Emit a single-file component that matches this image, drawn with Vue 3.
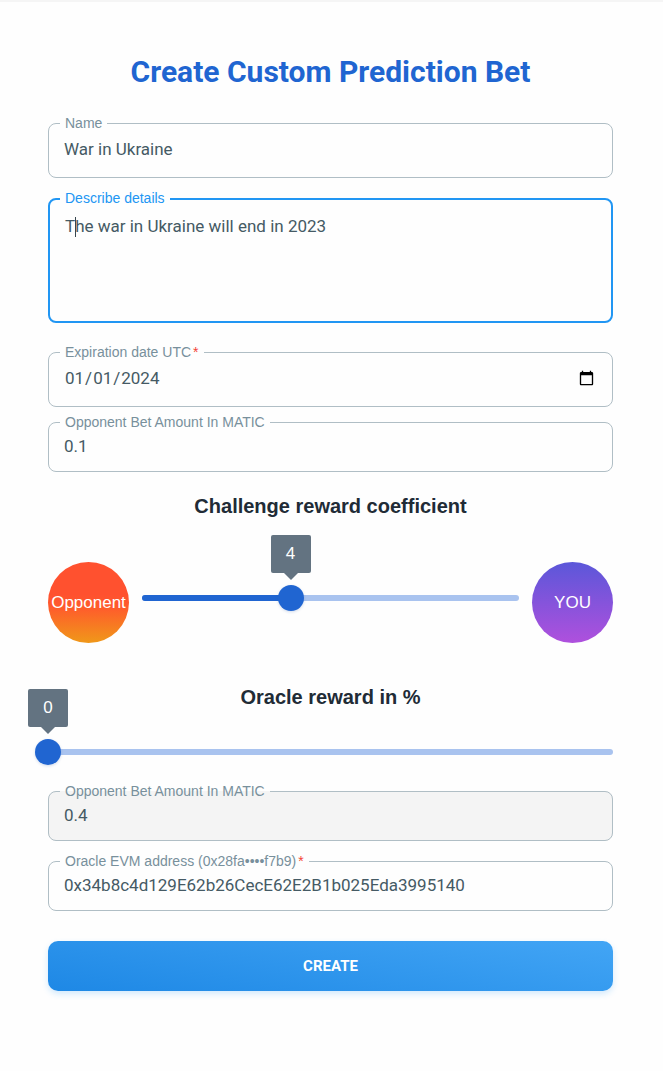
<script setup>
import { ref, computed } from 'vue'

const name = ref('War in Ukraine')
const details = ref('The war in Ukraine will end in 2023')
const expires = ref('2024-01-01')
const amount = ref('0.1')
const oracle = ref('0x34b8c4d129E62b26CecE62E2B1b025Eda3995140')
const coefficient = ref(4)
const reward = ref(0)

const coefficientPos = computed(() => ((coefficient.value - 0.1) / 9.9) * 100 + '%')
const rewardPos = computed(() => reward.value + '%')
const opponentAmount = computed(() => String(+(amount.value * coefficient.value).toFixed(4)))
</script>

<template>
  <main class="page">
    <form class="form" @submit.prevent>
      <h1 class="title">Create Custom Prediction Bet</h1>

      <fieldset class="field tall">
        <legend><label for="name">Name</label></legend>
        <input id="name" v-model="name" type="text" />
      </fieldset>

      <fieldset class="field active">
        <legend><label for="details">Describe details</label></legend>
        <textarea id="details" v-model="details" spellcheck="false"></textarea>
        <span class="caret" aria-hidden="true"></span>
      </fieldset>

      <fieldset class="field tall date">
        <legend><label for="expires">Expiration date UTC<span class="star">*</span></label></legend>
        <input id="expires" v-model="expires" type="date" />
      </fieldset>

      <fieldset class="field amount">
        <legend><label for="amount">Opponent Bet Amount In MATIC</label></legend>
        <input id="amount" v-model="amount" type="text" />
      </fieldset>

      <h2 class="heading"><label for="coefficient">Challenge reward coefficient</label></h2>
      <div class="versus">
        <div class="side opponent">Opponent</div>
        <div class="slider">
          <div class="rail"><div class="fill" :style="{ width: coefficientPos }"></div></div>
          <input id="coefficient" v-model.number="coefficient" type="range" min="0.1" max="10" step="0.1" />
          <output class="tip" :style="{ left: coefficientPos }">{{ coefficient }}</output>
        </div>
        <div class="side you">YOU</div>
      </div>

      <h2 class="heading second"><label for="reward">Oracle reward in %</label></h2>
      <div class="slider">
        <div class="rail"><div class="fill" :style="{ width: rewardPos }"></div></div>
        <input id="reward" v-model.number="reward" type="range" min="0" max="100" />
        <output class="tip" :style="{ left: rewardPos }">{{ reward }}</output>
      </div>

      <fieldset class="field locked">
        <legend><label for="total">Opponent Bet Amount In MATIC</label></legend>
        <input id="total" :value="opponentAmount" type="text" readonly />
      </fieldset>

      <fieldset class="field">
        <legend><label for="oracle">Oracle EVM address (0x28fa••••f7b9)<span class="star">*</span></label></legend>
        <input id="oracle" v-model="oracle" type="text" spellcheck="false" />
      </fieldset>

      <button class="create" type="submit">CREATE</button>
    </form>
  </main>
</template>

<style>
body {
  background: #fefefe;
}
</style>

<style scoped>
* {
  box-sizing: border-box;
}
.page {
  border-top: 2px solid #f5f5f5;
  padding: 50px 50px 80px 48px;
  font-family: "Liberation Sans", Arial, sans-serif;
}
.form {
  display: flex;
  flex-direction: column;
}
.title {
  margin: 0 0 24px;
  text-align: center;
  font: 700 30px/40px Roboto, sans-serif;
  color: #2065d1;
}
.field {
  position: relative;
  min-width: 0;
  margin: 13px 0 0;
  padding: 0 14px 10px 11px;
  border: 1px solid #b0bec5;
  border-radius: 8px;
}
.title + .field {
  margin-top: 0;
}
.field legend {
  padding: 0 5px;
  font-size: 14px;
  line-height: 15px;
  color: #78909c;
}
.field legend label {
  display: block;
}
.star {
  margin-left: 2px;
  color: #f44336;
}
.field input,
.field textarea {
  display: block;
  width: 100%;
  height: 31px;
  margin: 0;
  padding: 0 0 0 4px;
  border: 0;
  outline: 0;
  background: transparent;
  font: 400 17px/24px Roboto, sans-serif;
  color: #455a64;
}
.field.tall input {
  height: 36px;
}
.active {
  padding: 0 10px;
  border: 2px solid #2196f3;
}
.active legend {
  padding-bottom: 1px;
  color: #2196f3;
}
.field textarea {
  height: 114px;
  padding: 7px 5px;
  resize: none;
}
.caret {
  position: absolute;
  top: 10px;
  left: 25px;
  width: 1px;
  height: 20px;
  background: #37474f;
}
.date {
  margin-top: 22px;
  padding-right: 15px;
}
.amount {
  margin-top: 8px;
}
.locked {
  margin-top: 19px;
  background: #f4f4f4;
}
.heading {
  margin: 22px 0 44px;
  text-align: center;
  font-size: 20px;
  line-height: 24px;
  color: #212b36;
}
.second {
  margin: 42px 0 30px;
}
.versus {
  display: flex;
  align-items: center;
  gap: 13px;
}
.versus .slider {
  flex: 1;
  margin-bottom: 9px;
}
.side {
  display: flex;
  align-items: center;
  justify-content: center;
  flex: none;
  width: 81px;
  height: 81px;
  border-radius: 50%;
  font-size: 17px;
  color: #fff;
}
.opponent {
  background: linear-gradient(#ff512f 40%, #ff5a2c 55%, #f09819);
}
.you {
  background: linear-gradient(#5b57d9, #af50dd);
}
.slider {
  position: relative;
  display: flex;
  align-items: center;
  height: 26px;
}
.rail {
  flex: 1;
  height: 6px;
  border-radius: 3px;
  background: #a9c3ef;
  overflow: hidden;
}
.fill {
  height: 100%;
  background: #2065d1;
}
.slider input {
  position: absolute;
  inset: 0 -13px;
  width: calc(100% + 26px);
  height: 26px;
  margin: 0;
  appearance: none;
  background: transparent;
  outline: 0;
}
.slider input::-webkit-slider-thumb {
  appearance: none;
  width: 26px;
  height: 26px;
  border: 0;
  border-radius: 50%;
  background: #2065d1;
  box-shadow: 0 1px 3px rgba(32, 80, 160, 0.2);
}
.tip {
  position: absolute;
  bottom: 38px;
  width: 40px;
  height: 38px;
  margin-left: -20px;
  border-radius: 2px;
  background: #637381;
  text-align: center;
  font-size: 17px;
  line-height: 37px;
  color: #fff;
}
.tip::after {
  content: "";
  position: absolute;
  top: 100%;
  left: 50%;
  margin-left: -7px;
  border: 7px solid transparent;
  border-top-color: #637381;
  border-bottom: 0;
}
.create {
  height: 50px;
  margin-top: 30px;
  border: 0;
  border-radius: 10px;
  background: linear-gradient(10deg, #1e88e5, #42a5f5);
  box-shadow: 0 3px 6px rgba(33, 150, 243, 0.2);
  font: 700 15px/20px Roboto, sans-serif;
  color: #fff;
}
</style>
